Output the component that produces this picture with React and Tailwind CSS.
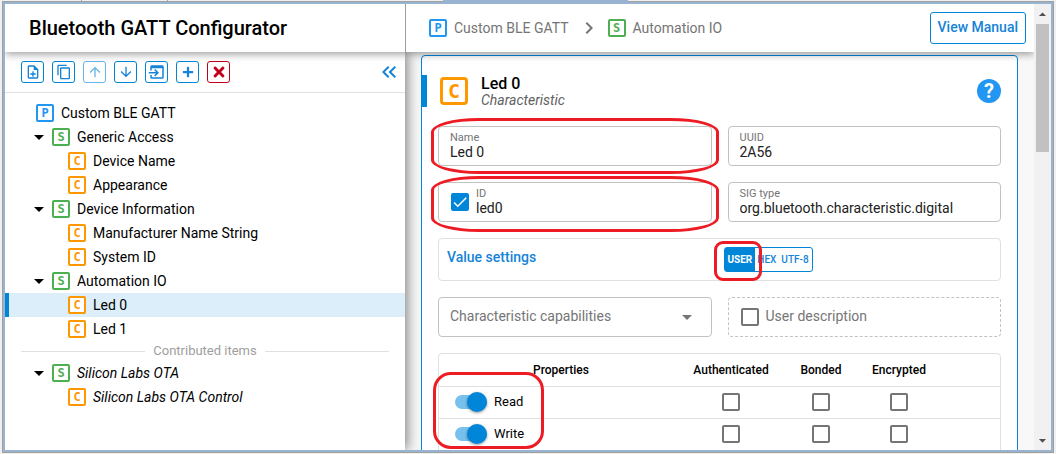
import React from "react";
import {
  MdOutlineNoteAdd,
  MdContentCopy,
  MdArrowUpward,
  MdArrowDownward,
  MdKeyboardDoubleArrowLeft,
  MdChevronRight,
  MdArrowDropDown,
  MdArrowDropUp,
  MdCheck,
} from "react-icons/md";
import { FaPlus, FaTimes } from "react-icons/fa";

const kindColors = {
  P: "border-[#2196f3] text-[#2196f3]",
  S: "border-[#4caf50] text-[#4caf50]",
  C: "border-[#ff9800] text-[#ff9800]",
};

function KindIcon({ kind, large }) {
  const size = large
    ? "size-7 border-3 rounded text-[20px]"
    : "size-[18px] border-2 rounded-[2px] text-[12px]";
  return (
    <span
      className={`flex shrink-0 items-center justify-center bg-white font-['DejaVu_Sans_Mono',monospace] leading-none font-bold not-italic ${size} ${kindColors[kind]}`}
    >
      {kind}
    </span>
  );
}

function ImportIcon() {
  return (
    <svg viewBox="0 0 24 24" className="size-[18px]" fill="currentColor" aria-hidden="true">
      <path d="M1,12H10.76L8.26,9.5L9.67,8.08L14.59,13L9.67,17.92L8.26,16.5L10.76,14H1V12M19,3C20.11,3 21,3.9 21,5V19A2,2 0 0,1 19,21H5A2,2 0 0,1 3,19V16H5V19H19V7H5V10H3V5A2,2 0 0,1 5,3H19Z" />
    </svg>
  );
}

function ToolButton({ label, tone = "border-[#0086d9] text-[#1583d8]", children }) {
  return (
    <button
      type="button"
      aria-label={label}
      className={`flex h-[22px] w-[23px] items-center justify-center rounded-[3px] border bg-white ${tone}`}
    >
      {children}
    </button>
  );
}

const tree = [
  { kind: "P", label: "Custom BLE GATT" },
  { kind: "S", label: "Generic Access" },
  { kind: "C", label: "Device Name" },
  { kind: "C", label: "Appearance" },
  { kind: "S", label: "Device Information" },
  { kind: "C", label: "Manufacturer Name String" },
  { kind: "C", label: "System ID" },
  { kind: "S", label: "Automation IO" },
  { kind: "C", label: "Led 0", selected: true },
  { kind: "C", label: "Led 1" },
];

const contributed = [
  { kind: "S", label: "Silicon Labs OTA", italic: true },
  { kind: "C", label: "Silicon Labs OTA Control", italic: true },
];

const indents = { P: "pl-[27px]", S: "pl-[18px]", C: "pl-[59px]" };

function TreeItem({ kind, label, selected, italic }) {
  return (
    <li
      className={`flex h-6 items-center border-l-4 text-[14px] ${indents[kind]} ${
        selected ? "border-[#0086d9] bg-[#dceef9]" : "border-transparent"
      } ${italic ? "italic" : ""}`}
    >
      {kind === "S" && <MdArrowDropDown className="mr-px size-6 shrink-0" />}
      <KindIcon kind={kind} />
      <span className="ml-[7px]">{label}</span>
    </li>
  );
}

function Sidebar() {
  return (
    <aside className="relative z-10 w-[400px] shrink-0 bg-white shadow-[2px_0_12px_rgba(0,0,0,0.5)]">
      <div className="flex h-[41px] items-center gap-2 border-b border-[#e0e0e0] pr-1 pl-4">
        <ToolButton label="New item">
          <MdOutlineNoteAdd className="size-4" />
        </ToolButton>
        <ToolButton label="Duplicate">
          <MdContentCopy className="size-4" />
        </ToolButton>
        <ToolButton label="Move up" tone="border-[#66b6e8] text-[#66b6e8]">
          <MdArrowUpward className="size-4" />
        </ToolButton>
        <ToolButton label="Move down">
          <MdArrowDownward className="size-4" />
        </ToolButton>
        <ToolButton label="Import">
          <ImportIcon />
        </ToolButton>
        <ToolButton label="Add">
          <FaPlus className="size-3" />
        </ToolButton>
        <ToolButton label="Delete" tone="border-[#c1001a] text-[#c1001a]">
          <FaTimes className="size-4" />
        </ToolButton>
        <button type="button" aria-label="Collapse panel" className="ml-auto text-[#1583d8]">
          <MdKeyboardDoubleArrowLeft className="size-6" />
        </button>
      </div>
      <ul className="pt-2">
        {tree.map((item) => (
          <TreeItem key={item.label} {...item} />
        ))}
      </ul>
      <div className="flex h-5 items-center gap-2 px-4 text-[13px] text-[#9e9e9e]">
        <span className="h-px flex-1 bg-[#e0e0e0]" />
        Contributed items
        <span className="h-px flex-1 bg-[#e0e0e0]" />
      </div>
      <ul>
        {contributed.map((item) => (
          <TreeItem key={item.label} {...item} />
        ))}
      </ul>
    </aside>
  );
}

function Checkbox({ id, label, defaultChecked }) {
  return (
    <span className="relative inline-flex size-[18px] shrink-0">
      <input
        id={id}
        type="checkbox"
        aria-label={label}
        defaultChecked={defaultChecked}
        className="peer size-[18px] appearance-none rounded-[2px] border-2 border-[#757575] bg-white checked:border-[#0086d9] checked:bg-[#0086d9]"
      />
      <MdCheck className="pointer-events-none absolute inset-0 hidden size-[18px] text-white peer-checked:block" />
    </span>
  );
}

function Field({ id, label, value, toggle, mark }) {
  return (
    <div className="relative flex h-10 items-center rounded border border-[#c2c2c2] pr-3 pl-[11px]">
      {toggle && (
        <span className="mr-[7px] flex pl-px">
          <Checkbox label="Use custom ID" defaultChecked />
        </span>
      )}
      <div className="flex min-w-0 flex-1 flex-col pb-px">
        <label htmlFor={id} className="h-3 text-[11px] leading-3 text-[#757575]">
          {label}
        </label>
        <input
          id={id}
          defaultValue={value}
          className="h-4 w-full bg-transparent text-[14px] leading-4 text-[#212121] outline-none"
        />
      </div>
      {mark && (
        <span
          className={`pointer-events-none absolute rounded-[48px/14px] border-3 border-[#ed1c24] ${mark}`}
        />
      )}
    </div>
  );
}

function ValueSettings() {
  const idle = "text-[#1583d8]";
  return (
    <div className="grid h-[43px] grid-cols-2 items-center rounded border border-[#e0e0e0]">
      <h3 className="pb-1 pl-2 text-[14px] font-medium text-[#1583d8]">Value settings</h3>
      <div className="flex pl-[4px]">
        <div className="relative flex h-[25px] rounded-[3px] border border-[#0086d9] text-[10px] font-medium">
          <button type="button" className="bg-[#0086d9] px-[3px] font-bold text-white">
            USER
          </button>
          <button type="button" className={`px-[2px] ${idle}`}>
            HEX
          </button>
          <button type="button" className={`px-[3px] ${idle}`}>
            UTF-8
          </button>
          <span className="pointer-events-none absolute -top-[7px] -left-[11px] h-10 w-12 rounded-[9px] border-3 border-[#ed1c24]" />
        </div>
      </div>
    </div>
  );
}

function Switch({ label }) {
  return (
    <label className="flex items-center gap-[7px] text-[13px]">
      <input
        type="checkbox"
        role="switch"
        defaultChecked
        className="relative h-[14px] w-8 appearance-none rounded-full bg-[#bdbdbd] before:absolute before:-top-[3px] before:left-0 before:size-5 before:rounded-full before:bg-white before:shadow-[0_1px_3px_rgba(0,0,0,0.4)] checked:bg-[#78c0ee] checked:before:left-3 checked:before:bg-[#0086d9]"
      />
      {label}
    </label>
  );
}

function PropertiesTable() {
  return (
    <div className="relative rounded-t border border-[#e0e0e0]">
      <table className="w-full table-fixed border-collapse text-[12px]">
        <colgroup>
          <col />
          <col className="w-24" />
          <col className="w-[84px]" />
          <col className="w-[72px]" />
          <col className="w-[65px]" />
        </colgroup>
        <thead>
          <tr className="h-8 border-b border-[#e0e0e0]">
            <th className="p-0 font-medium">Properties</th>
            <th className="p-0 font-medium">Authenticated</th>
            <th className="p-0 font-medium">Bonded</th>
            <th className="p-0 font-medium">Encrypted</th>
            <td />
          </tr>
        </thead>
        <tbody>
          {["Read", "Write"].map((name) => (
            <tr key={name} className="h-8 border-b border-[#e0e0e0]">
              <td className="p-0 pl-4">
                <Switch label={name} />
              </td>
              {["authenticated", "bonded", "encrypted"].map((flag) => (
                <td key={flag} className="p-0 text-center">
                  <span className="flex justify-center">
                    <Checkbox label={`${name} ${flag}`} />
                  </span>
                </td>
              ))}
              <td />
            </tr>
          ))}
        </tbody>
      </table>
      <span className="pointer-events-none absolute top-[18px] -left-[6px] h-[77px] w-[111px] rounded-[18px] border-3 border-[#ed1c24]" />
    </div>
  );
}

function Editor() {
  return (
    <main className="min-w-0 flex-1 overflow-hidden bg-[#f8f8f8] pt-[3px] pr-4 pl-4">
      <section className="rounded border border-[#0086d9] bg-white pr-4 pb-4">
        <header className="flex h-[70px] items-center">
          <span className="h-8 w-[5px] bg-[#0086d9]" />
          <span className="ml-[13px]">
            <KindIcon kind="C" large />
          </span>
          <div className="ml-[13px] flex-1 pt-px">
            <h2 className="text-[16px] leading-4 font-medium">Led 0</h2>
            <p className="text-[14px] leading-4 text-[#616161] italic">Characteristic</p>
          </div>
          <button
            type="button"
            aria-label="Help"
            className="flex size-6 items-center justify-center rounded-full bg-[#2196f3] text-[20px] leading-none font-bold text-white"
          >
            ?
          </button>
        </header>
        <div className="flex flex-col gap-4 pl-4">
          <div className="grid grid-cols-2 gap-4">
            <Field id="name" label="Name" value="Led 0" mark="-inset-x-2 -inset-y-[9px]" />
            <Field id="uuid" label="UUID" value="2A56" />
            <Field
              id="item-id"
              label="ID"
              value="led0"
              toggle
              mark="-inset-x-2 -top-[7px] -bottom-[11px]"
            />
            <Field id="sig" label="SIG type" value="org.bluetooth.characteristic.digital" />
          </div>
          <ValueSettings />
          <div className="grid grid-cols-2 gap-4">
            <div className="relative flex h-10 items-center rounded border border-[#c2c2c2]">
              <select
                aria-label="Characteristic capabilities"
                className="h-full w-full appearance-none bg-transparent pr-10 pb-px pl-[11px] text-[14px] text-[#757575] outline-none"
              >
                <option>Characteristic capabilities</option>
              </select>
              <MdArrowDropDown className="pointer-events-none absolute right-3 size-6 text-[#757575]" />
            </div>
            <div className="flex h-10 items-center gap-[7px] rounded border border-dashed border-[#c2c2c2] pl-3">
              <Checkbox id="user-description" />
              <label htmlFor="user-description" className="pb-px text-[14px] text-[#757575]">
                User description
              </label>
            </div>
          </div>
          <PropertiesTable />
        </div>
      </section>
    </main>
  );
}

function TopBar() {
  return (
    <header className="relative z-20 flex h-12 shrink-0 bg-white shadow-[0_2px_8px_rgba(0,0,0,0.4)]">
      <h1 className="flex w-[400px] shrink-0 items-center pl-6 text-[20px] font-medium">
        Bluetooth GATT Configurator
      </h1>
      <div className="flex min-w-0 flex-1 items-center border-l border-[#9e9e9e] pr-2 pl-[23px] text-[14px] text-[#757575]">
        <nav className="flex items-center">
          <KindIcon kind="P" />
          <a href="#gatt" className="ml-[7px]">
            Custom BLE GATT
          </a>
          <MdChevronRight className="mr-[7px] ml-2 size-6" />
          <KindIcon kind="S" />
          <a href="#automation" className="ml-[7px]">
            Automation IO
          </a>
        </nav>
        <button
          type="button"
          className="ml-auto h-8 rounded-[3px] border border-[#0086d9] px-[7px] pb-px text-[14px] font-medium text-[#1583d8]"
        >
          View Manual
        </button>
      </div>
    </header>
  );
}

function ScrollBar() {
  return (
    <div className="flex w-[17px] shrink-0 flex-col items-center bg-[#f1f1f1] text-[#505050]">
      <span className="flex h-5 items-center">
        <MdArrowDropUp className="size-[17px]" />
      </span>
      <span className="h-32 w-[13px] bg-[#c1c1c1]" />
      <span className="mt-auto flex h-5 items-center">
        <MdArrowDropDown className="size-[17px]" />
      </span>
    </div>
  );
}

export default function App() {
  return (
    <div className="flex h-screen flex-col overflow-hidden bg-[#f0f0f0] pr-[2px] pb-px pl-[2px] font-['Roboto',sans-serif] text-black">
      <div className="flex h-[2px] shrink-0 border-b border-[#a0a0a0]">
        <span className="w-20 border-r border-[#a0a0a0]" />
        <span className="w-[86px] border-r border-[#a0a0a0]" />
        <span className="w-[275px]" />
        <span className="-mb-px h-[2px] w-[185px] bg-[#99b4d1]" />
      </div>
      <div className="flex min-h-0 flex-1 border-x border-b border-[#a0a0a0]">
        <div className="flex min-w-0 flex-1 border-2 border-[#99b4d1]">
          <div className="flex min-w-0 flex-1 flex-col overflow-hidden">
            <TopBar />
            <div className="flex min-h-0 flex-1">
              <Sidebar />
              <Editor />
            </div>
          </div>
          <ScrollBar />
        </div>
      </div>
    </div>
  );
}
